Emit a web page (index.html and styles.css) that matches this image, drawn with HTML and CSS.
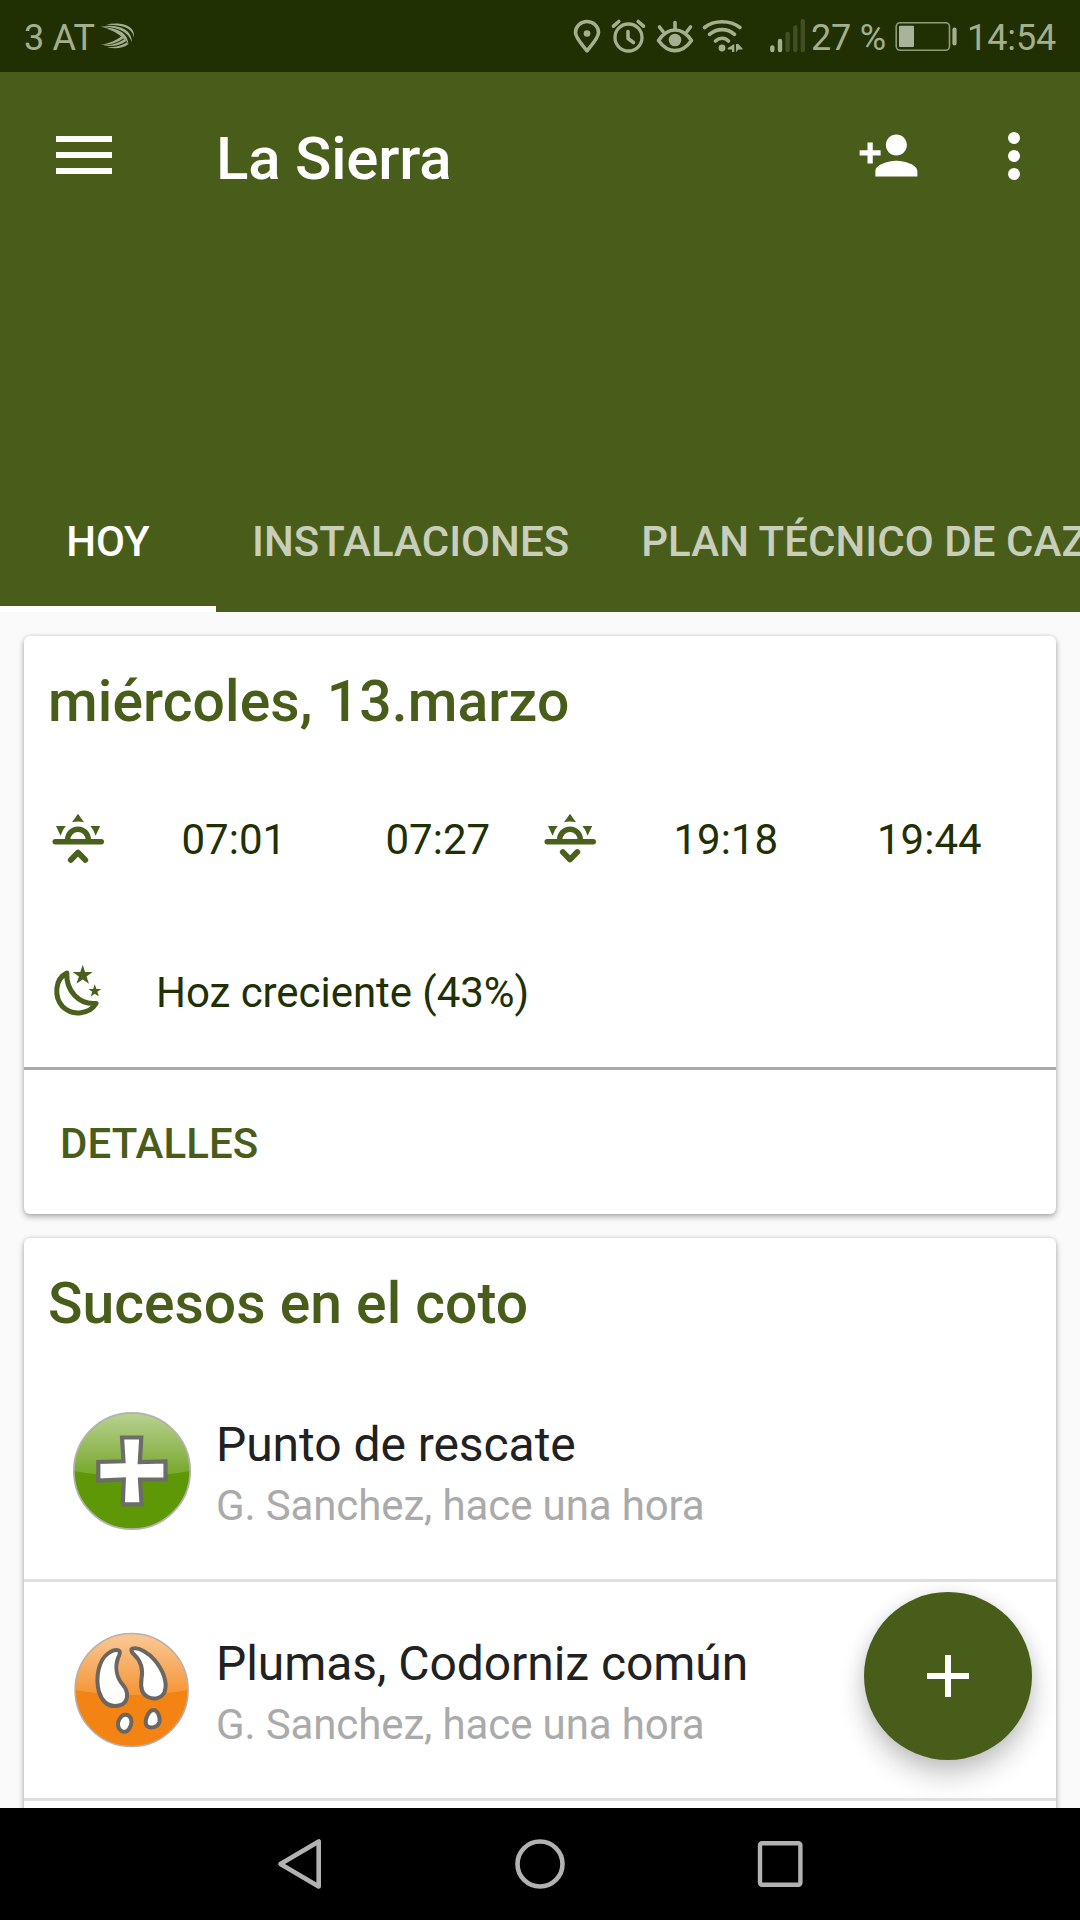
FILE: index.html
```html
<!DOCTYPE html>
<html lang="es">
<head>
<meta charset="utf-8">
<title>La Sierra</title>
<link rel="stylesheet" href="styles.css">
</head>
<body>
<div class="screen">
  <div class="status">
    <span class="carrier">3 AT</span>
    <svg class="swift" viewBox="99 22 38 30" width="38" height="30" fill="#a4af90">
      <path d="M106 25.800C119 22.500 135.500 25.500 134 38.500C132.500 28.500 121 25.500 106 25.800Z"/>
      <path d="M100 27.300C116 25 132 28.500 132 43.500C128.500 33 119 28.300 100 27.300Z"/>
      <path d="M101 27.800C116 29 128 32.500 128.500 46C124.500 36 117 31.500 101 27.800Z"/>
      <path d="M107 29.800C118 31.500 125.500 37 126 42.500C120.500 35.500 115 33 107 29.800Z"/>
      <path d="M100 45.800C110 44.500 116.500 41 121.500 37.300L123.500 39.200C117.500 43.500 111 46.300 100 45.800Z"/>
      <path d="M103 46.500C113 46.500 119.500 43.500 124.500 40L126.300 42C120 46.300 113 48 103 46.500Z"/>
      <path d="M107 48C116 48.500 122 46.500 127 43.300L128 45.500C122 49.500 115 50.300 107 48Z"/>
    </svg>
    <div class="status-right">
      <svg viewBox="572 18 30 37" width="30" height="37" fill="none" stroke="#a4af90" stroke-width="3.600">
        <path stroke-linejoin="round" d="M587 50.800C582.500 45 575.500 38 575.500 32.500A11.500 11 0 0 1 598.500 32.500C598.500 38 591.500 45 587 50.800Z"/>
        <circle cx="587" cy="33.500" r="3.300" fill="#a4af90" stroke="none"/>
      </svg>
      <svg class="alarm" viewBox="610 18 38 37" width="38" height="37" fill="none" stroke="#a4af90" stroke-width="3.300" stroke-linecap="round" stroke-linejoin="round">
        <circle cx="628.500" cy="37.500" r="13.500"/>
        <path stroke-width="3.600" d="M628 31.500V38.500L633.500 42.500M613.500 26.200L618.800 21.500M643.500 26.200L638.200 21.500"/>
      </svg>
      <svg class="eye" viewBox="655 18 40 37" width="40" height="37" fill="none" stroke="#a4af90" stroke-width="3.600" stroke-linecap="round">
        <path stroke-linejoin="round" d="M658.500 40.500C668 26.500 682 26.500 691.500 40.500C682 54 668 54 658.500 40.500Z"/>
        <circle cx="675" cy="40" r="6.300" fill="#a4af90" stroke="none"/>
        <path d="M675 22.500V29M659.500 27L663 31.500M690.500 27L687 31.500"/>
      </svg>
      <svg class="wifi" viewBox="701 18 44 37" width="44" height="37" fill="none" stroke="#a4af90" stroke-width="3.600" stroke-linecap="round">
        <path d="M704.500 27.500C714 19.800 730 19.800 740 27.500M709.500 34.300C717 28 727.500 28 734.500 34.300M715.500 41C719.500 37.300 725 37.300 728.500 41"/>
        <circle cx="722" cy="48" r="3.400" fill="#a4af90" stroke="none"/>
        <path d="M734.300 44V52H732V49.500H727.800V48ZM736 44H738.300L742.500 48.500V49.500H738.500L736 52Z" fill="#a4af90" stroke="none"/>
      </svg>
      <svg class="signal" viewBox="768 18 40 37" width="40" height="37" stroke="#a4af90" stroke-width="4.400" stroke-linecap="round">
        <path d="M772.300 47.500V50M780 41V50"/>
        <path stroke="#405024" d="M787.600 34V50M795.300 27.500V50M802.800 21.200V50"/>
      </svg>
      <span class="percent">27 %</span>
      <svg viewBox="894 18 64 37" width="64" height="37" fill="none">
        <rect x="896.200" y="22.700" width="53.300" height="27.600" rx="4" stroke="#8f9c78" stroke-width="1.600"/>
        <rect x="899" y="25.700" width="15" height="21.300" rx="1" fill="#a9b39a"/>
        <path d="M954.500 29.500V43.500" stroke="#a4af90" stroke-width="4.200" stroke-linecap="round"/>
      </svg>
      <span class="clock">14:54</span>
    </div>
  </div>

  <header class="header">
    <div class="toolbar">
      <svg class="menu" viewBox="0 0 56 38" width="56" height="38" fill="#fff"><path d="M0 0h56v6H0zM0 16h56v6H0zM0 32h56v6H0z"/></svg>
      <h1 class="title">La Sierra</h1>
      <svg class="add-person" viewBox="0 0 24 24" width="63" height="63" fill="#fff"><path d="M15 12c2.210 0 4-1.790 4-4s-1.790-4-4-4-4 1.790-4 4 1.790 4 4 4zm-9-2V7H4v3H1v2h3v3h2v-3h3v-2H6zm9 4c-2.670 0-8 1.340-8 4v2h16v-2c0-2.660-5.330-4-8-4z"/></svg>
      <svg class="more" viewBox="0 0 12 48" width="12" height="48" fill="#fff"><circle cx="6" cy="6" r="6"/><circle cx="6" cy="24" r="6"/><circle cx="6" cy="42" r="6"/></svg>
    </div>
    <nav class="tabs">
      <span class="tab active">HOY</span>
      <span class="tab">INSTALACIONES</span>
      <span class="tab">PLAN TÉCNICO DE CAZA</span>
    </nav>
  </header>

  <main class="content">
    <section class="card">
      <h2 class="heading date">miércoles, 13.marzo</h2>
      <div class="times">
        <svg viewBox="48 809 60 60" width="60" height="60" fill="none" stroke="#4a601d" stroke-linecap="round" stroke-linejoin="round">
          <path stroke-width="5.400" d="M55.200 840.800H101.300"/>
          <path stroke-width="5.400" stroke-linecap="butt" d="M67.700 840.500V838.500A10.300 10.300 0 0 1 88.300 838.500V840.500"/>
          <path stroke-width="5.800" d="M70.800 859L78 851.500L85.300 859"/>
          <path fill="#4a601d" stroke="none" d="M78 812.800L84 821.300Q78 819.800 72 821.300ZM56 825H65.800Q62.500 828.500 60.600 834.800ZM100.200 825H90.400Q93.700 828.500 95.600 834.800Z"/>
        </svg>
        <span>07:01</span>
        <span>07:27</span>
        <svg viewBox="48 809 60 60" width="60" height="60" fill="none" stroke="#4a601d" stroke-linecap="round" stroke-linejoin="round">
          <path stroke-width="5.400" d="M55.200 840.800H101.300"/>
          <path stroke-width="5.400" stroke-linecap="butt" d="M67.700 840.500V838.500A10.300 10.300 0 0 1 88.300 838.500V840.500"/>
          <path stroke-width="5.800" d="M70.800 851L78 858.500L85.300 851"/>
          <path fill="#4a601d" stroke="none" d="M78 812.800L84 821.300Q78 819.800 72 821.300ZM56 825H65.800Q62.500 828.500 60.600 834.800ZM100.200 825H90.400Q93.700 828.500 95.600 834.800Z"/>
        </svg>
        <span>19:18</span>
        <span>19:44</span>
      </div>
      <div class="moon">
        <svg viewBox="48 963 60 60" width="60" height="60" fill="none">
          <path stroke="#4a601d" stroke-width="5" stroke-linejoin="round" d="M66.800 973C54.500 979 54 997 62.500 1006.500C73 1017 90 1013.500 96 1003.500C79 1005 66 991 66.800 973Z"/>
          <path fill="#4a601d" d="M82.700 964.800L85.100 972H92.700L86.500 976.500L89 983.800L82.700 979.400L76.400 983.800L78.900 976.500L72.700 972H80.300ZM94.800 984.300L96.400 988.900H101.200L97.400 991.800L98.800 996.600L94.800 993.800L90.800 996.600L92.200 991.800L88.400 988.900H93.200Z"/>
        </svg>
        <span>Hoz creciente (43%)</span>
      </div>
      <div class="details">DETALLES</div>
    </section>

    <section class="card">
      <h2 class="heading">Sucesos en el coto</h2>
      <ul class="events">
        <li class="event">
          <svg viewBox="70 1409 124 124" width="124" height="124">
            <defs>
              <linearGradient id="gloss" x1="0" y1="0" x2="0" y2="1">
                <stop offset="0" stop-color="#fff" stop-opacity=".56"/>
                <stop offset="1" stop-color="#fff" stop-opacity=".14"/>
              </linearGradient>
            </defs>
            <circle cx="132" cy="1471" r="58" fill="#5f9806"/>
            <path fill="url(#gloss)" d="M74 1471A58 58 0 0 1 190 1471Q132 1482 74 1471Z"/>
            <circle cx="132" cy="1471" r="58.200" fill="none" stroke="#b1b3ad" stroke-width="1.700"/>
            <path fill="#fff" stroke="#6c6c68" stroke-width="4.200" d="M122 1437.500H141.300L139.800 1462L165.500 1461.300V1479.300L140 1479.500L141.600 1504.300H122.800L123.800 1479.500L98.300 1480.500V1462L123.500 1461.300Z"/>
          </svg>
          <div class="event-text">
            <div class="event-title">Punto de rescate</div>
            <div class="event-meta">G. Sanchez, hace una hora</div>
          </div>
        </li>
        <li class="event">
          <svg viewBox="70 1628 124 124" width="124" height="124">
            <circle cx="131.600" cy="1690" r="56.500" fill="#f38414"/>
            <path fill="url(#gloss)" d="M75 1690A56.500 56.500 0 0 1 188 1690Q132 1700 75 1690Z"/>
            <circle cx="131.600" cy="1690" r="56.500" fill="none" stroke="#b8b0a8" stroke-width="1.600"/>
            <g fill="#fff" stroke="#6c6660" stroke-width="4" stroke-linejoin="round">
              <path d="M118.500 1650.300C120.500 1651 120 1654.500 118 1658C114.500 1668 117 1678 123 1685C129 1692 129 1703 119 1705.500C108 1708 102 1701 99 1692C95 1677 99 1660 108 1653.500C112 1650.500 116 1649.500 118.500 1650.300Z"/>
              <path d="M132.500 1648.700C138 1646.500 149 1653 155 1660.500C163 1670 168 1683 164.500 1692C161.500 1698.500 154 1700 148 1697C140.500 1693.500 140.500 1686 141.500 1679C143.500 1668 140 1660 134 1654.500C131.500 1652.500 130.500 1649.500 132.500 1648.700Z"/>
              <path d="M126 1714.800C131 1715.500 132.500 1720.500 130.800 1725.500C128.500 1731.500 125 1733 121.500 1731C117.500 1728.500 117 1723 119.500 1719C121 1716.500 123 1714.500 126 1714.800Z"/>
              <path d="M153.500 1710C157.500 1710 160.500 1717 159.500 1722C158 1727.500 150.500 1729 147 1726C144.500 1723.500 146 1717 148.500 1713.500C150 1711 152 1710 153.500 1710Z"/>
            </g>
          </svg>
          <div class="event-text">
            <div class="event-title">Plumas, Codorniz común</div>
            <div class="event-meta">G. Sanchez, hace una hora</div>
          </div>
        </li>
        <li class="event"></li>
      </ul>
    </section>
  </main>

  <div class="fab">
    <svg viewBox="0 0 42 42" width="42" height="42" fill="#fff"><path d="M18 0h6v18h18v6H24v18h-6V24H0v-6h18z"/></svg>
  </div>

  <footer class="navbar">
    <svg viewBox="276 1837 48 54" width="48" height="54" fill="none" stroke="#b2b2b2" stroke-width="4.600" stroke-linejoin="round"><path d="M318.700 1841.500V1886.500L280.500 1864Z"/></svg>
    <svg viewBox="513 1837 54 54" width="54" height="54" fill="none" stroke="#b2b2b2" stroke-width="4.600"><circle cx="540" cy="1864" r="22.500"/></svg>
    <svg viewBox="756 1837 48 54" width="48" height="54" fill="none" stroke="#b2b2b2" stroke-width="4.400"><rect x="760" y="1843.300" width="40.400" height="41.400" rx="2"/></svg>
  </footer>
</div>
</body>
</html>
```
FILE: styles.css
```css
* { box-sizing: border-box; }
body {
  margin: 0;
  font-family: Roboto, "Liberation Sans", sans-serif;
  color: #213002;
}
svg { display: block; flex: none; }
.screen {
  position: relative;
  display: flex;
  flex-direction: column;
  width: 1080px;
  height: 1920px;
  overflow: hidden;
  background: #fafafa;
}

.status {
  flex: none;
  display: flex;
  align-items: center;
  height: 72px;
  padding: 0 23px 0 24px;
  background: #213002;
  color: #a4af90;
  font-size: 36px;
  line-height: 42px;
  white-space: nowrap;
}
.carrier { width: 75px; padding-top: 3px; letter-spacing: -.3px; }
.status-right {
  display: flex;
  align-items: center;
  margin-left: auto;
}
.alarm { margin-left: 8px; }
.eye { margin-left: 7px; }
.wifi { margin-left: 6px; }
.signal { margin-left: 23px; }
.percent { width: 83px; margin-left: 3px; padding-top: 3px; letter-spacing: -.2px; }
.clock { width: 90px; margin-left: 9px; padding-top: 3px; letter-spacing: -.1px; }

.header {
  flex: none;
  display: flex;
  flex-direction: column;
  justify-content: space-between;
  height: 540px;
  background: #495d1b;
  color: #fff;
}
.toolbar {
  display: flex;
  align-items: center;
  height: 168px;
  padding: 0 60px 2px 56px;
}
.title {
  margin: 0 0 0 104px;
  padding-top: 7px;
  font-size: 60px;
  line-height: 70px;
  font-weight: 500;
  letter-spacing: -.2px;
}
.add-person { margin-left: auto; }
.more { margin: 2px 0 0 88px; }
.tabs {
  display: flex;
  overflow: hidden;
  height: 144px;
}
.tab {
  flex: none;
  padding: 5px 36px 0;
  font-size: 42px;
  font-weight: 500;
  line-height: 137px;
  letter-spacing: .06px;
  color: #c8ceba;
  white-space: nowrap;
}
.tab.active {
  width: 216px;
  border-bottom: 6px solid #fff;
  color: #fff;
  text-align: center;
}

.content {
  flex: 1;
  min-height: 0;
  display: flex;
  flex-direction: column;
  gap: 24px;
  padding: 24px 24px 0;
  overflow: hidden;
}
.card {
  flex: none;
  border-radius: 6px;
  background: #fff;
  box-shadow: 0 3px 6px rgba(0, 0, 0, .28), 0 0 4px rgba(0, 0, 0, .14);
}
.heading {
  margin: 0;
  padding: 32px 24px 0;
  font-size: 57px;
  line-height: 67px;
  font-weight: 500;
  color: #495d1b;
}
.heading.date { letter-spacing: .1px; }
.times {
  display: grid;
  grid-template-columns: 133.5px 204px 154.5px 133.5px 203.5px auto;
  align-items: center;
  height: 119px;
  margin-top: 45px;
  padding-left: 24px;
  font-size: 42px;
}
.moon {
  display: flex;
  align-items: center;
  gap: 48px;
  height: 168px;
  padding: 19px 0 0 24px;
  font-size: 42px;
  letter-spacing: -.05px;
}
.details {
  height: 147px;
  padding: 4px 36px 0;
  border-top: 3px solid #a9a9a9;
  font-size: 42px;
  font-weight: 500;
  line-height: 140px;
  letter-spacing: .1px;
  color: #495d1b;
}
.events {
  margin: 26px 0 0;
  padding: 0;
  list-style: none;
}
.event {
  display: flex;
  align-items: center;
  gap: 22px;
  height: 219px;
  padding-left: 46px;
  border-bottom: 3px solid #dfdfdf;
}
.event-text {
  align-self: flex-start;
  padding-top: 53px;
}
.event-title {
  font-size: 48px;
  line-height: 57px;
  letter-spacing: -.06px;
  color: #212121;
}
.event-meta {
  margin-top: 8px;
  font-size: 42px;
  line-height: 50px;
  letter-spacing: -.12px;
  color: #aaa;
}

.fab {
  position: absolute;
  right: 48px;
  bottom: 160px;
  display: flex;
  align-items: center;
  justify-content: center;
  width: 168px;
  height: 168px;
  border-radius: 50%;
  background: #495d1b;
  box-shadow: 0 16px 28px rgba(0, 0, 0, .2), 0 2px 18px rgba(0, 0, 0, .1);
}

.navbar {
  position: relative;
  flex: none;
  display: flex;
  align-items: center;
  justify-content: center;
  gap: 189px;
  height: 112px;
  background: #000;
}
```
